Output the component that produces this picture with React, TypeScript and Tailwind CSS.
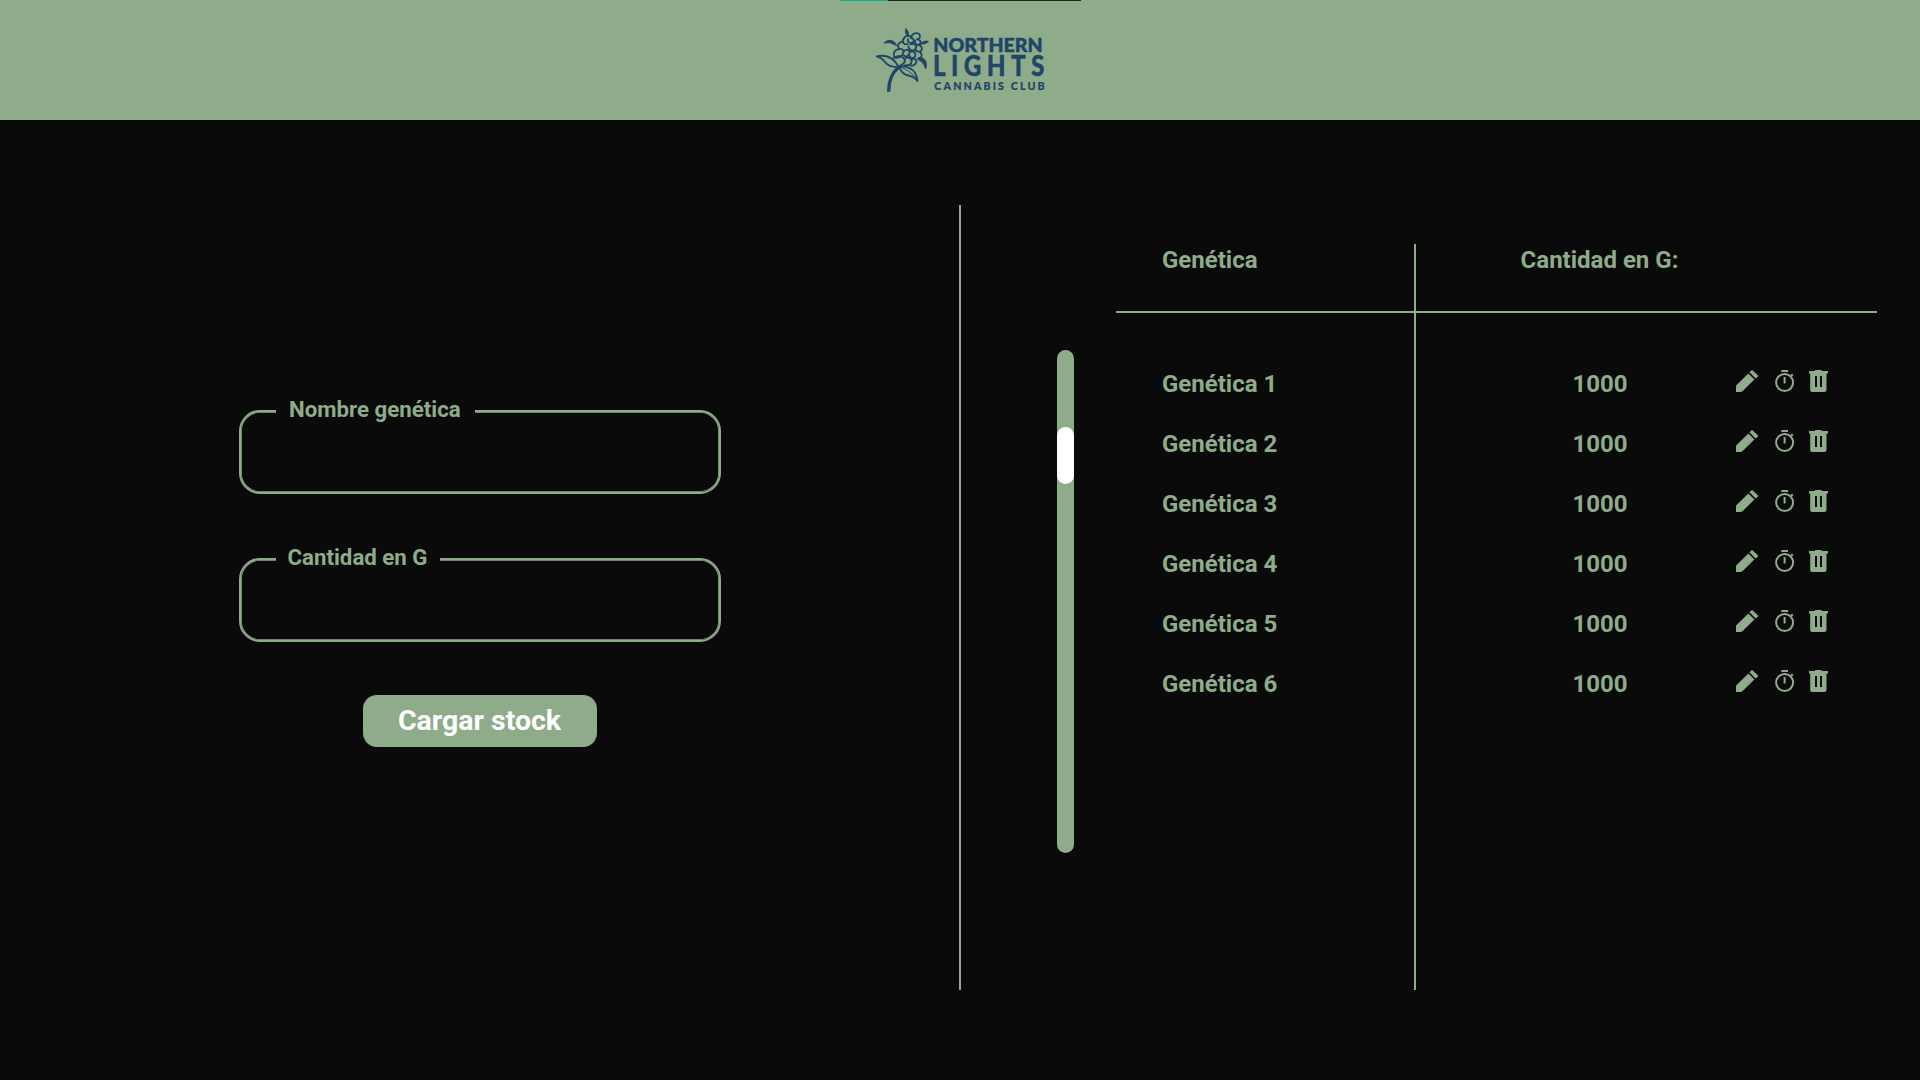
import React from "react";

const rows = [1, 2, 3, 4, 5, 6].map((n) => ({ name: `Genética ${n}`, amount: 1000 }));

function Logo() {
  return (
    <svg width="200" height="90" viewBox="0 0 600 270" className="text-[#1f4567]" fill="none" stroke="currentColor" strokeLinecap="round" strokeLinejoin="round">
      <g strokeWidth="6">
        <path d="M117 153C98 168 86 194 86 227" strokeWidth="10" strokeLinecap="butt" />
        <path d="M50 121C72 116 94 122 105 137C112 146 115 151 117 153C96 155 80 146 73 136C67 127 59 123 50 121Z" strokeWidth="5.5" />
        <path d="M118 152C137 149 157 157 165 171C170 179 172 187 172 195C163 183 154 181 143 178C130 174 121 164 118 152Z" strokeWidth="5.5" />
        <path d="M119 153C141 159 159 172 171 194" strokeWidth="3" />
        <path d="M74 81C84 69 101 71 109 88C99 83 90 75 74 81Z" fill="currentColor" strokeWidth="4" />
        <path d="M178 125C193 126 203 138 197 157C193 144 189 135 175 130" fill="currentColor" strokeWidth="4" />
        <path d="M138 39C145 45 148 52 143 61C136 54 135 47 138 39Z" fill="currentColor" strokeWidth="3" />
        <path d="M182 84C190 76 198 74 204 77C198 80 193 85 182 84Z" fill="currentColor" strokeWidth="4" />
      </g>
      <g strokeWidth="5.5">
        <path d="M132 67C136 57 151 57 154 66C153 55 166 47 177 54C184 60 179 70 171 70" />
        <path d="M154 66C163 67 164 77 156 80C147 82 141 76 144 69" />
        <path d="M171 70C183 70 186 84 176 86C167 88 161 80 166 74" />
        <path d="M132 67C123 75 131 88 143 84" />
        <path d="M130 77C117 76 110 88 117 99" />
        <path d="M151 85C164 79 173 91 166 100C158 108 145 102 145 91" />
        <path d="M176 87C190 92 188 107 176 107C170 107 166 104 166 100" />
        <path d="M117 99C103 101 98 112 103 125C118 127 128 119 131 106C136 99 147 101 149 108C149 119 140 124 131 119" />
        <path d="M149 108C158 103 168 110 166 119C163 128 151 128 148 119" />
        <path d="M179 108C190 116 184 128 174 127" />
        <path d="M103 125C111 118 125 119 133 129C139 136 129 146 118 150" />
        <path d="M133 129C143 120 155 126 155 136C154 145 145 149 133 148" />
        <path d="M155 130C164 126 173 133 168 141C164 148 156 151 151 148" />
        <path d="M117 99C125 97 130 101 131 107" />
      </g>
      <g fill="currentColor" stroke="currentColor" fontFamily="Lato, sans-serif">
        <text x="220" y="109" fontSize="59" fontWeight="900" strokeWidth="1.5" textLength="328" lengthAdjust="spacingAndGlyphs">NORTHERN</text>
        <text transform="translate(219 178.500) scale(.88 1)" fontSize="83" fontWeight="900" strokeWidth="1" textLength="380" lengthAdjust="spacing">LIGHTS</text>
        <text x="223" y="221" fontSize="32" fontWeight="900" strokeWidth="0.5" textLength="331" lengthAdjust="spacing">CANNABIS CLUB</text>
      </g>
    </svg>
  );
}

function Pencil() {
  return (
    <svg width="22" height="22" viewBox="0 0 22 22" fill="currentColor">
      <path d="M0 22V16.5Q0 15.6 .8 14.8L12.4 3.4L18.4 9.4L7.2 20.6Q6 21.8 4.5 22Z" />
      <path d="M13.4 2.3L15.3.5Q16 -.2 16.8.5L21.8 5.2Q22.5 6 21.8 6.7L19.6 8.5Z" />
    </svg>
  );
}

function Timer() {
  return (
    <svg width="20" height="22" viewBox="0 0 20 22" fill="none" stroke="currentColor" strokeWidth="2">
      <path d="M6.3 1H13M9.6 7V13.5M16 6L17.8 4.2" />
      <circle cx="9.6" cy="12.5" r="8.5" />
    </svg>
  );
}

function Trash() {
  return (
    <svg width="19" height="22" viewBox="0 0 19 22" fill="currentColor">
      <path fillRule="evenodd" d="M0 1H5.5L6.5 0H12L13 1H19V3.5H17.5V20Q17.5 22 15.5 22H3Q1.2 22 1.2 20V3.5H0ZM6 6V17H8V6ZM11 6V17H13V6Z" />
    </svg>
  );
}

function Field({ label, labelClass, className }: { label: string; labelClass: string; className: string }) {
  return (
    <div className={`relative h-[84px] w-[482px] shrink-0 rounded-[21px] border-2 border-[#8fac8a] shadow-[inset_0_0_0_0.8px_#8fac8a] ${className}`}>
      <span className={`absolute top-[-17px] left-[35px] h-[30px] bg-[#0a0a0a] text-[22.25px] leading-[28px] font-bold whitespace-nowrap ${labelClass}`}>{label}</span>
    </div>
  );
}

export default function App() {
  return (
    <div className="flex h-[1080px] w-[1920px] flex-col overflow-hidden bg-[#0a0a0a] font-['Roboto',sans-serif] text-[#8fac8a]">
      <header className="relative flex h-[120px] shrink-0 justify-center bg-[#8fac8a] pt-4">
        <div className="absolute top-0 left-[840px] flex h-px w-[241px] bg-[#222]">
          <div className="w-12 bg-[#00b894]" />
        </div>
        <Logo />
      </header>
      <main className="flex h-[960px]">
        <section className="flex w-[960px] shrink-0 flex-col items-center pt-[290px]">
          <Field label="Nombre genética" className="" labelClass="w-[199px] pl-[13px]" />
          <Field label="Cantidad en G" className="mt-[64px]" labelClass="w-[164px] pl-[11.5px]" />
          <button className="mt-[53px] h-[52px] w-[234px] rounded-[14px] bg-[#8fac8a] pr-[1px] text-[28.5px] leading-none font-bold text-white">Cargar stock</button>
        </section>
        <div className="-ml-px mt-[85px] h-[785px] w-0.5 shrink-0 bg-[#8fac8a]" />
        <section className="flex">
          <div className="mt-[230px] ml-24 h-[503px] w-[17px] rounded-full bg-[#8fac8a] pt-[77px]">
            <div className="h-[57px] rounded-full bg-white" />
          </div>
          <div className="relative mt-[124px] ml-[42px] h-[746px] w-[761px] text-[24px] leading-[28px] font-bold">
            <div className="absolute top-0 left-[298px] h-full w-0.5 bg-[#8fac8a]" />
            <div className="flex h-[69px] border-b-2 border-[#8fac8a] pt-[2px]">
              <span className="w-[300px] pl-[46px]">Genética</span>
              <span className="w-[367px] text-center">Cantidad en G:</span>
            </div>
            <div className="pt-[43px]">
              {rows.map((row) => (
                <div key={row.name} className="flex h-[60px] items-start pt-[14px]">
                  <span className="w-[300px] pl-[46px]">{row.name}</span>
                  <span className="w-[320px] pl-[156.5px]">{row.amount}</span>
                  <div className="flex">
                    <Pencil />
                    <div className="ml-[17px]"><Timer /></div>
                    <div className="ml-[14px]"><Trash /></div>
                  </div>
                </div>
              ))}
            </div>
          </div>
        </section>
      </main>
    </div>
  );
}
